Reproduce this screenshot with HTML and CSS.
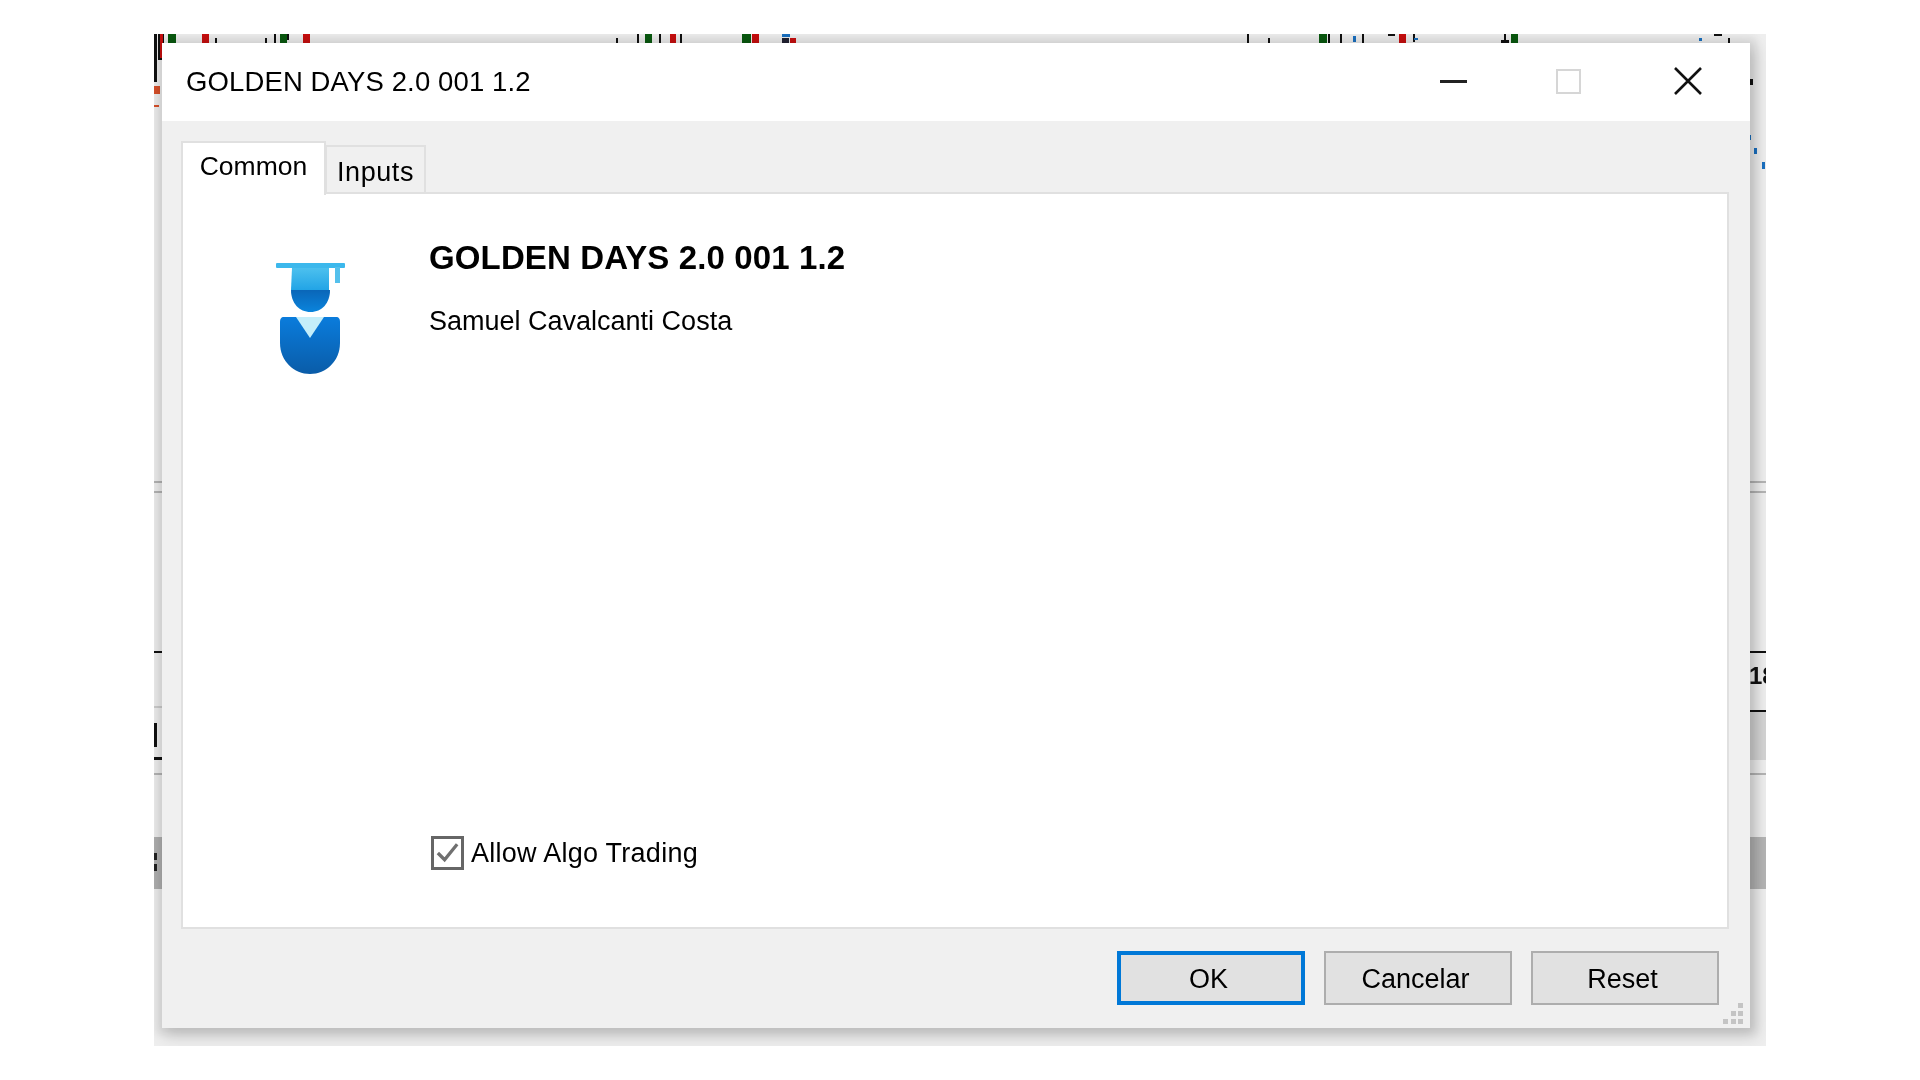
FILE: index.html
```html
<!DOCTYPE html>
<html lang="en">
	<head>
		<meta charset="UTF-8" />
		<title>GOLDEN DAYS 2.0 001 1.2</title>
		<link rel="stylesheet" href="styles.css">
	</head>
	<body>
		<div id="shot">
			<!-- bits of the chart that stick out around the dialog -->
			<svg id="chart" width="1612" height="1012" viewBox="154 34 1612 1012">
				<g fill="#111">
					<rect x="154" y="34" width="3" height="48" />
					<rect x="158" y="34" width="6" height="26" />
					<rect x="215" y="38" width="2" height="5" />
					<rect x="265" y="38" width="2" height="6" />
					<rect x="274" y="34" width="2" height="9" />
					<rect x="287" y="34" width="2" height="6" />
					<rect x="616" y="38" width="2" height="5" />
					<rect x="637" y="34" width="2" height="9" />
					<rect x="659" y="34" width="2" height="9" />
					<rect x="680" y="34" width="2" height="9" />
					<rect x="1247" y="34" width="2" height="9" />
					<rect x="1268" y="38" width="2" height="5" />
					<rect x="1328" y="34" width="2" height="9" />
					<rect x="1340" y="34" width="2" height="9" />
					<rect x="1362" y="34" width="2" height="9" />
					<rect x="1388" y="34" width="7" height="2" />
					<rect x="1413" y="34" width="2" height="8" />
					<rect x="1501" y="40" width="8" height="3" />
					<rect x="1504" y="34" width="2" height="8" />
					<rect x="1714" y="34" width="8" height="2" />
					<rect x="1728" y="38" width="2" height="5" />
					<rect x="154" y="651" width="8" height="2" />
					<rect x="154" y="723" width="3" height="24" />
					<rect x="154" y="757" width="8" height="3" />
					<rect x="1750" y="651" width="16" height="2" />
					<rect x="1750" y="710" width="16" height="2" />
					<rect x="1750" y="79" width="3" height="6" />
				</g>
				<g fill="#0a5a10">
					<rect x="168" y="34" width="8" height="9" />
					<rect x="280" y="34" width="7" height="9" />
					<rect x="645" y="34" width="7" height="9" />
					<rect x="742" y="34" width="9" height="9" />
					<rect x="1319" y="34" width="8" height="9" />
					<rect x="1511" y="34" width="7" height="9" />
				</g>
				<g fill="#c80f0f">
					<rect x="160" y="34" width="3" height="24" />
					<rect x="202" y="34" width="7" height="9" />
					<rect x="303" y="34" width="7" height="9" />
					<rect x="670" y="34" width="6" height="9" />
					<rect x="752" y="34" width="7" height="9" />
					<rect x="1399" y="34" width="7" height="9" />
					<rect x="790" y="38" width="6" height="5" />
				</g>
				<g fill="#1a70c0">
					<rect x="782" y="34" width="8" height="3" />
					<rect x="1353" y="36" width="3" height="6" />
					<rect x="1414" y="38" width="4" height="2" />
					<rect x="1699" y="38" width="3" height="3" />
					<rect x="1748" y="135" width="3" height="5" />
					<rect x="1754" y="148" width="3" height="6" />
					<rect x="1762" y="162" width="3" height="7" />
				</g>
				<rect x="782" y="38" width="7" height="5" fill="#223" />
				<g fill="#d8502a">
					<rect x="154" y="86" width="6" height="8" />
					<rect x="154" y="105" width="5" height="2" />
				</g>
				<g fill="#b4b4b4">
					<rect x="154" y="481" width="8" height="2" />
					<rect x="154" y="491" width="8" height="2" />
					<rect x="154" y="773" width="8" height="2" />
					<rect x="1750" y="481" width="16" height="2" />
					<rect x="1750" y="491" width="16" height="2" />
					<rect x="1750" y="773" width="16" height="2" />
				</g>
				<rect x="154" y="706" width="8" height="2" fill="#ccc" />
				<rect x="154" y="837" width="8" height="52" fill="#b0b0b0" />
				<rect x="154" y="853" width="3" height="7" fill="#222" />
				<rect x="154" y="864" width="3" height="7" fill="#222" />
				<rect x="1750" y="712" width="16" height="48" fill="#d4d4d4" />
				<rect x="1750" y="837" width="16" height="52" fill="#b4b4b4" />
			</svg>
			<span id="scaleLabel">18</span>

			<div id="dialog">
				<div class="titlebar">
					<span class="titleText">GOLDEN DAYS 2.0 001 1.2</span>
					<div class="winButtons">
						<span class="winBtn"><i class="minIcon"></i></span>
						<span class="winBtn"><i class="maxIcon"></i></span>
						<span class="winBtn">
							<svg width="28" height="28" viewBox="0 0 28 28"><path d="M1 1 27 27M27 1 1 27" stroke="#111" stroke-width="2.6" fill="none" /></svg>
						</span>
					</div>
				</div>

				<div class="content">
					<div class="tabs">
						<div class="tab active">Common</div>
						<div class="tab">Inputs</div>
					</div>
					<div class="panel">
						<div class="info">
							<svg class="eaIcon" width="70" height="112" viewBox="0 0 70 112">
								<defs>
									<linearGradient id="capGrad" x1="0" y1="0" x2="0" y2="1">
										<stop offset="0" stop-color="#4cc0ee" />
										<stop offset="1" stop-color="#22a4e6" />
									</linearGradient>
									<linearGradient id="headGrad" x1="0" y1="0" x2="0" y2="1">
										<stop offset="0" stop-color="#0a66b8" />
										<stop offset="1" stop-color="#0a84dc" />
									</linearGradient>
									<linearGradient id="bodyGrad" x1="0" y1="0" x2="0" y2="1">
										<stop offset="0" stop-color="#0a7cdc" />
										<stop offset="1" stop-color="#0a5ca8" />
									</linearGradient>
								</defs>
								<path d="M15 27C15 40 23 49 34.500 49S54 40 54 27Z" fill="url(#headGrad)" />
								<path d="M16 5H53V27H15Z" fill="url(#capGrad)" />
								<rect x="0" y="0" width="69" height="5" rx="1" fill="#3cb8ec" />
								<rect x="59" y="4" width="5" height="16" fill="#54c0ec" />
								<path d="M8 54H60C63 54 64 56 64 59V80C64 98 50 111 34 111S4 98 4 80V59C4 56 5 54 8 54Z" fill="url(#bodyGrad)" />
								<path d="M20 54H48L34 75Z" fill="#c4eefa" />
							</svg>
							<div class="infoText">
								<div class="eaName">GOLDEN DAYS 2.0 001 1.2</div>
								<div class="eaAuthor">Samuel Cavalcanti Costa</div>
							</div>
						</div>
						<label class="algoRow">
							<span class="checkBox">
								<svg width="28" height="28" viewBox="0 0 28 28"><path d="M4 14 11 21 24 5" stroke="#707070" stroke-width="3.4" fill="none" /></svg>
							</span>
							<span>Allow Algo Trading</span>
						</label>
					</div>
				</div>

				<div class="footer">
					<button class="btn primary">OK</button>
					<button class="btn">Cancelar</button>
					<button class="btn">Reset</button>
					<svg class="grip" width="22" height="22" viewBox="0 0 22 22" fill="#c4c4c4">
						<rect x="15" y="0" width="5" height="5" />
						<rect x="8" y="8" width="5" height="5" />
						<rect x="15" y="8" width="5" height="5" />
						<rect x="0" y="16" width="5" height="5" />
						<rect x="8" y="16" width="5" height="5" />
						<rect x="15" y="16" width="5" height="5" />
					</svg>
				</div>
			</div>
		</div>
	</body>
</html>
```

FILE: styles.css
```css
body {
	margin: 0;
	background: #fff;
	font-family: "Liberation Sans", Arial, sans-serif;
	color: #000;
}

#shot {
	position: relative;
	width: 1612px;
	height: 1012px;
	margin: 34px 0 0 154px;
	padding: 9px 0 0 8px;
	box-sizing: border-box;
	overflow: hidden;
	background: #eeeeee;
	filter: blur(0.7px);
}

#chart {
	position: absolute;
	left: 0;
	top: 0;
}

#scaleLabel {
	position: absolute;
	left: 1595px;
	top: 630px;
	font-size: 24px;
	font-weight: bold;
	line-height: 24px;
	color: #111;
}

#dialog {
	position: relative;
	width: 1588px;
	height: 985px;
	display: flex;
	flex-direction: column;
	background: #f0f0f0;
	box-shadow: 0 0 8px 6px rgba(0, 0, 0, 0.07), 4px 6px 14px 2px rgba(0, 0, 0, 0.16);
}

.titlebar {
	height: 78px;
	flex: none;
	display: flex;
	align-items: center;
	justify-content: space-between;
	background: #fff;
	padding: 0 3px 0 24px;
}

.titleText {
	font-size: 27.500px;
	letter-spacing: 0.12px;
}

.winButtons {
	display: flex;
	margin: -2px 1px 0 0;
}

.winBtn {
	width: 117px;
	height: 40px;
	display: flex;
	align-items: center;
	justify-content: center;
}

.minIcon {
	width: 27px;
	height: 3px;
	background: #222;
}

.maxIcon {
	width: 25px;
	height: 25px;
	margin-right: 4px;
	box-sizing: border-box;
	border: 2px solid #d6d6d6;
}

.content {
	flex: 1;
	display: flex;
	flex-direction: column;
	padding: 20px 21px 0 19px;
}

.tabs {
	display: flex;
	align-items: flex-end;
	height: 51px;
	flex: none;
}

.tab {
	height: 47px;
	width: 101px;
	box-sizing: border-box;
	border: 2px solid #e0e0e0;
	border-bottom: 0;
	margin-left: -1px;
	font-size: 27px;
	letter-spacing: 0.6px;
	line-height: 50px;
	text-align: center;
}

.tab.active {
	position: relative;
	z-index: 2;
	height: 54px;
	width: 145px;
	margin: 0 0 -3px 0;
	background: #fff;
	font-size: 26.500px;
	letter-spacing: 0;
	line-height: 46px;
}

.panel {
	flex: 1;
	display: flex;
	flex-direction: column;
	background: #fff;
	border: 2px solid #e0e0e0;
}

.info {
	display: flex;
	align-items: flex-start;
	padding: 69px 0 0 93px;
}

.eaIcon {
	flex: none;
}

.infoText {
	margin: -25px 0 0 83px;
}

.eaName {
	font-size: 33px;
	font-weight: bold;
	letter-spacing: 0.13px;
	line-height: 40px;
}

.eaAuthor {
	font-size: 27px;
	line-height: 36px;
	margin-top: 25px;
}

.algoRow {
	margin: auto 0 57px 248px;
	display: flex;
	align-items: center;
	gap: 7px;
	font-size: 27px;
	letter-spacing: 0.27px;
}

.checkBox {
	width: 33px;
	height: 34px;
	box-sizing: border-box;
	border: 3px solid #666;
	display: flex;
	align-items: center;
	justify-content: center;
}

.footer {
	position: relative;
	height: 99px;
	flex: none;
	display: flex;
	justify-content: flex-end;
	gap: 19px;
	padding: 22px 31px 0 0;
	box-sizing: border-box;
}

.btn {
	width: 188px;
	height: 54px;
	box-sizing: border-box;
	background: #e1e1e1;
	border: 2px solid #adadad;
	font-family: inherit;
	font-size: 27px;
	color: #000;
	padding: 2px 5px 0 0;
}

.btn.primary {
	border: 4px solid #0078d7;
}

.grip {
	position: absolute;
	right: 5px;
	bottom: 3px;
}
```
